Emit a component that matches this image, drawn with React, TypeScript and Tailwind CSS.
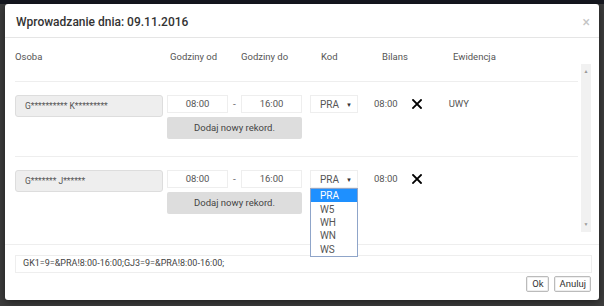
const font = { fontFamily: 'Roboto, "Liberation Sans", sans-serif' };

const codes = ['PRA', 'W5', 'WH', 'WN', 'WS'];

function TimeBlock() {
  return (
    <div className="flex w-[135px] flex-col gap-[4px]">
      <div className="flex h-[18px] items-center">
        <div className="flex h-full w-[61px] items-center justify-center border border-[#eee] text-[9.5px] text-[#555]">08:00</div>
        <div className="flex w-[13px] justify-center text-[10px] text-[#777]">-</div>
        <div className="flex h-full w-[61px] items-center justify-center border border-[#eee] text-[9.5px] text-[#555]">16:00</div>
      </div>
      <button
        type="button"
        className="h-[22px] w-[135px] rounded-[2px] bg-[#ddd] text-[9.5px] text-[#444]"
      >
        Dodaj nowy rekord.
      </button>
    </div>
  );
}

function CloseMark() {
  return (
    <svg width="10" height="10" viewBox="0 0 10 10" className="text-black">
      <path d="M1 1L9 9M9 1L1 9" stroke="currentColor" strokeWidth="1.8" strokeLinecap="square" />
    </svg>
  );
}

function Row({ name, ewid, open, last }: { name: string; ewid?: string; open?: boolean; last?: boolean }) {
  return (
    <div className={`flex h-[75px] items-start pt-[13px] ${last ? '' : 'border-b border-[#eee]'}`}>
      <div className="flex h-[22px] w-[148px] items-center rounded-[3px] border border-[#ddd] bg-[#eee] pl-[9px] text-[8.5px] text-[#555]">
        {name}
      </div>
      <div className="ml-[4px]">
        <TimeBlock />
      </div>
      <div className="relative ml-[8px]">
        <div className="flex h-[18px] w-[48px] items-center justify-between border border-[#eee] pl-[9px] pr-[5px] text-[10px] text-[#555]">
          <span>PRA</span>
          <span className="text-[6px] text-[#333]">▼</span>
        </div>
        {open && (
          <div className="absolute left-0 top-full z-10 w-[48px] border border-[#8fa5c9] bg-white text-[10px] text-[#555]">
            {codes.map((c, i) => (
              <div
                key={c}
                className={`flex h-[13.4px] items-center pl-[9px] ${i === 0 ? 'bg-[#1e90ff] text-white' : ''}`}
              >
                {c}
              </div>
            ))}
          </div>
        )}
      </div>
      <div className="ml-[16px] flex h-[18px] items-center text-[9.5px] text-[#555]">08:00</div>
      <div className="ml-[14px] flex h-[18px] items-center">
        <CloseMark />
      </div>
      <div className="ml-[27px] flex h-[18px] items-center text-[9.5px] text-[#555]">{ewid}</div>
    </div>
  );
}

export default function App() {
  return (
    <div className="flex h-[306px] w-[604px] flex-col overflow-hidden bg-[#3d3d3d]" style={font}>
      <div className="h-[4px] bg-[#161820]" />
      <div className="ml-[5px] flex h-[296px] w-[594px] flex-col rounded-[3px] bg-white shadow-[0_2px_8px_rgba(0,0,0,0.5)]">
        <div className="flex h-[34px] items-center justify-between border-b border-[#e5e5e5] pl-[11px] pr-[9px] pt-[2px]">
          <h1 className="text-[12px] font-medium text-[#333]">Wprowadzanie dnia: 09.11.2016</h1>
          <span className="text-[14px] leading-none text-[#c4c4c4]">×</span>
        </div>

        <div className="flex h-[26px] pl-[10px] pt-[12px] text-[9.5px] leading-[13px] text-[#555]">
          <div className="w-[155px]">Osoba</div>
          <div className="w-[71px]">Godziny od</div>
          <div className="w-[80px]">Godziny do</div>
          <div className="w-[61px]">Kod</div>
          <div className="w-[71px]">Bilans</div>
          <div>Ewidencja</div>
        </div>

        <div className="flex h-[180px] pl-[10px] pr-[8px]">
          <div className="flex w-[563px] flex-col">
            <div className="h-[18px] shrink-0 border-b border-[#eee]" />
            <Row name="G********** K*********" ewid="UWY" />
            <Row name="G******* J******" open last />
          </div>
          <div className="ml-[3px] flex h-[168px] w-[10px] flex-col items-center justify-between bg-[#f1f1f1] py-[4px] text-[5px] text-[#999]">
            <span>▲</span>
            <span>▼</span>
          </div>
        </div>

        <div className="flex flex-1 flex-col border-t border-[#eee] px-[10px] pt-[10px]">
          <div className="flex h-[18px] w-[577px] items-center border border-[#eee] pl-[7px] text-[9px] text-[#444]">
            GK1=9=&amp;PRA!8:00-16:00;GJ3=9=&amp;PRA!8:00-16:00;
          </div>
          <div className="mt-[3px] flex w-[577px] justify-end gap-[5px] pr-[1px]">
            <button type="button" className="h-[16px] rounded-[2px] border border-[#bbb] bg-white px-[5px] text-[9.5px] leading-none text-[#333] shadow-[inset_0_0_0_1px_#eee]">
              Ok
            </button>
            <button type="button" className="h-[16px] rounded-[2px] border border-[#bbb] bg-white px-[4px] text-[9.5px] leading-none text-[#333] shadow-[inset_0_0_0_1px_#eee]">
              Anuluj
            </button>
          </div>
        </div>
      </div>
    </div>
  );
}
